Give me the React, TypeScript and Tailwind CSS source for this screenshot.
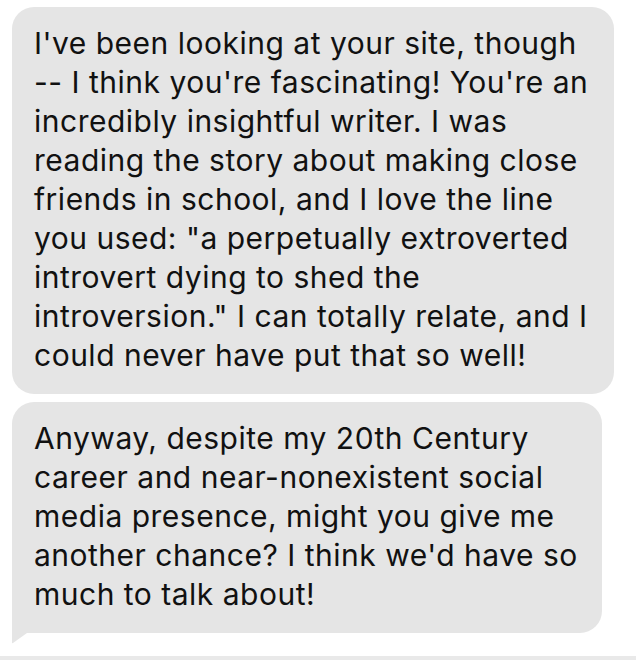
import React from "react";

const first = [
  "I've been looking at your site, though",
  "-- I think you're fascinating! You're an",
  "incredibly insightful writer. I was",
  "reading the story about making close",
  "friends in school, and I love the line",
  'you used: "a perpetually extroverted',
  "introvert dying to shed the",
  'introversion." I can totally relate, and I',
  "could never have put that so well!",
];

const second = [
  "Anyway, despite my 20th Century",
  "career and near-nonexistent social",
  "media presence, might you give me",
  "another chance? I think we'd have so",
  "much to talk about!",
];

function Lines({ lines }: { lines: string[] }) {
  return (
    <>
      {lines.map((l, i) => (
        <div key={i} className="whitespace-nowrap">
          {l}
        </div>
      ))}
    </>
  );
}

export default function App() {
  return (
    <div
      className="w-[636px] h-[660px] bg-white flex flex-col overflow-hidden text-[30px] leading-[39px] text-[#111] tracking-[0.5px]"
      style={{ fontFamily: "Inter, 'Liberation Sans', sans-serif" }}
    >
      <div className="flex flex-col gap-2 pt-[7px] pl-3">
        <div className="w-[602px] rounded-[22px] bg-[#e5e5e5] pl-[22px] pt-[17px] pb-[19px]">
          <Lines lines={first} />
        </div>
        <div className="relative w-[590px] rounded-[22px] rounded-bl-none bg-[#e5e5e5] pl-[22px] pt-[17px] pb-[19px]">
          <Lines lines={second} />
          <svg
            className="absolute left-0 top-full"
            width="16"
            height="11"
            viewBox="0 0 16 11"
          >
            <path d="M0 0 L0 9.5 Q0 10.5 1 10 L15 0 Z" fill="#e5e5e5" />
          </svg>
        </div>
      </div>
      <div className="mt-auto h-[4px] bg-[#e9e9e9]" />
    </div>
  );
}
